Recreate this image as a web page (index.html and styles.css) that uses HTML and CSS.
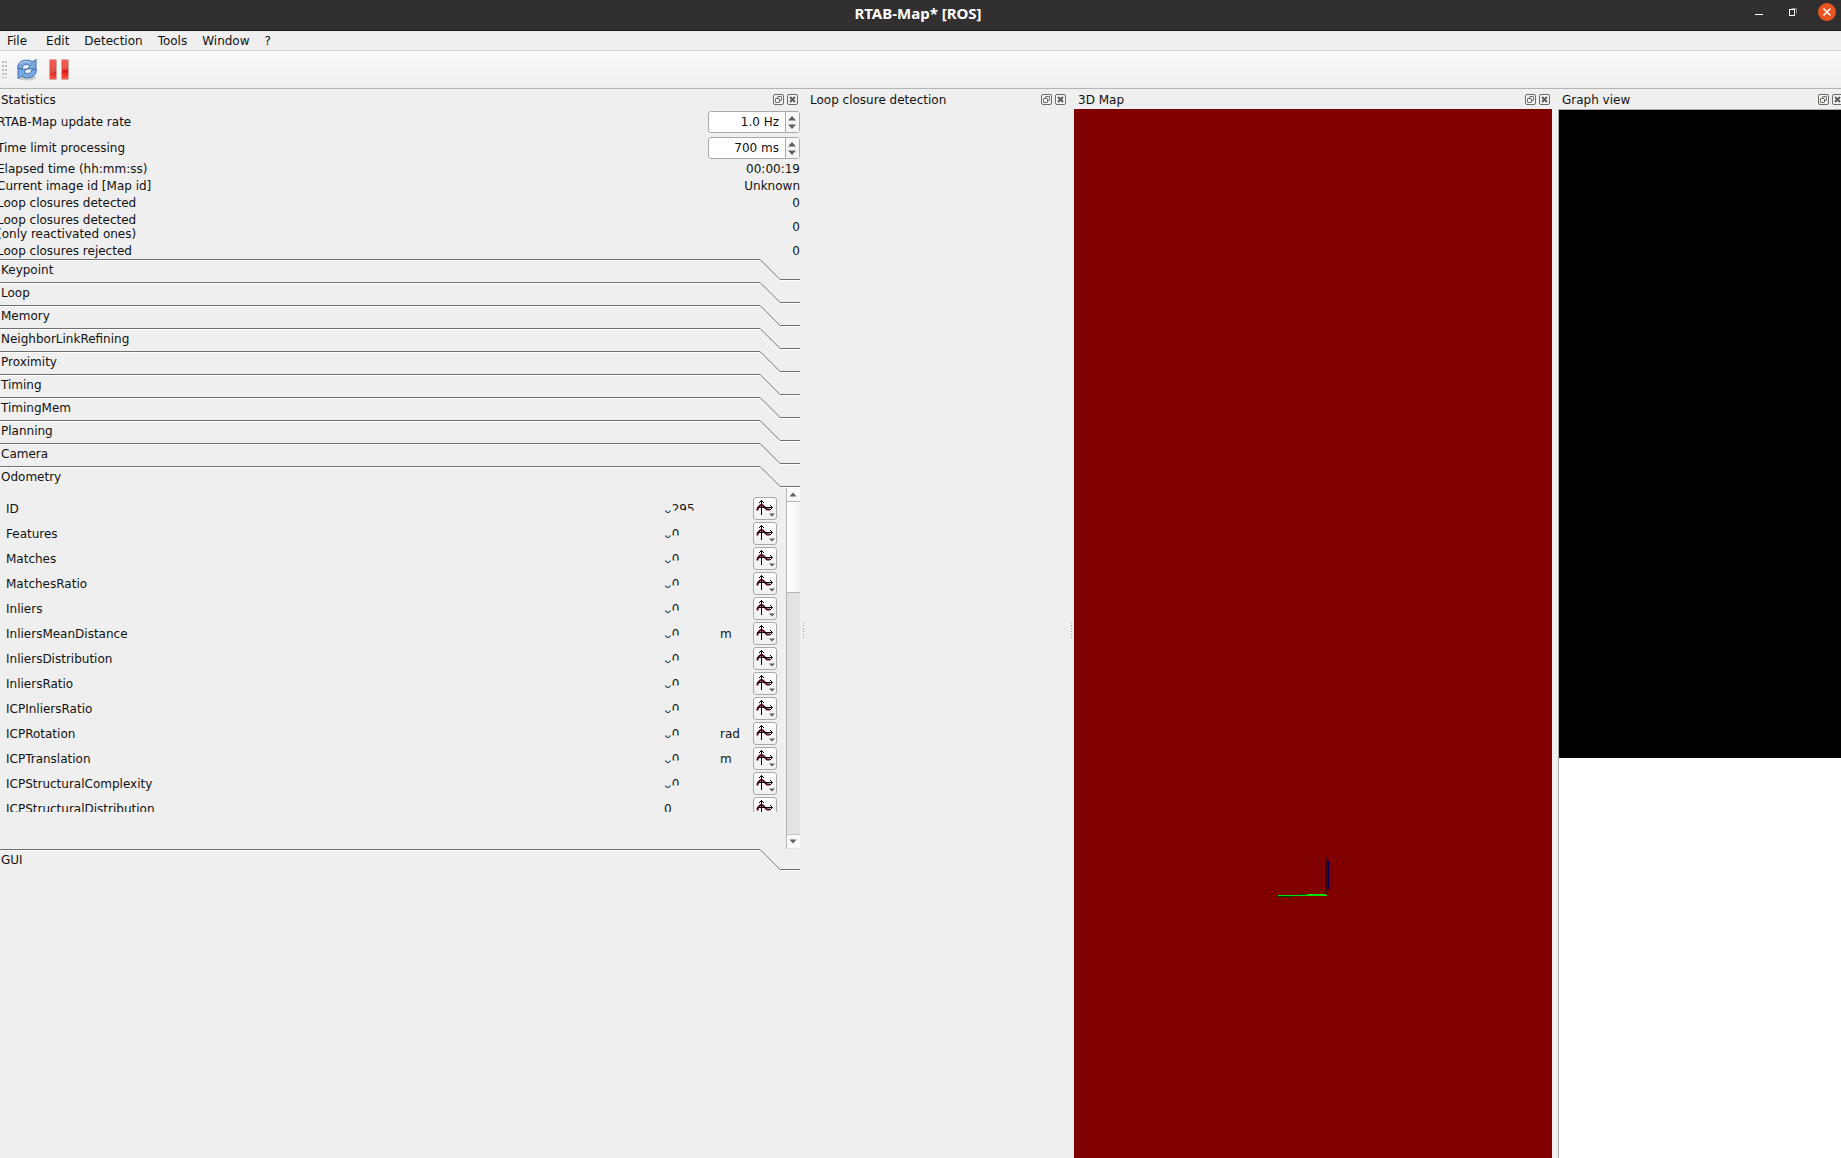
FILE: index.html
```html
<!DOCTYPE html>
<html lang="en">
<head>
<meta charset="utf-8">
<title>RTAB-Map* [ROS]</title>
<link rel="stylesheet" href="styles.css">
</head>
<body>
<svg class="defs" aria-hidden="true">
  <linearGradient id="shine" x1="0" y1="0" x2="0" y2="1"><stop offset="0" stop-color="#ff6054"/><stop offset=".5" stop-color="#e2504a"/><stop offset="1" stop-color="#e2504a"/></linearGradient>
  <linearGradient id="shade" x1="0" y1="0" x2="0" y2="1"><stop offset="0" stop-color="#d40a04"/><stop offset="1" stop-color="#ff5a4e"/></linearGradient>
  <symbol id="float" viewBox="0 0 11 11"><rect x=".5" y=".5" width="10" height="10" rx="1.5" fill="#f4f4f3" stroke="#6e6c69"/><rect x="4.5" y="2.5" width="4" height="4" rx=".5" fill="none" stroke="#6e6c69"/><rect x="2.5" y="4.5" width="4" height="4" rx=".5" fill="#f4f4f3" stroke="#6e6c69"/></symbol>
  <symbol id="close" viewBox="0 0 11 11"><rect x=".5" y=".5" width="10" height="10" rx="1.5" fill="#f4f4f3" stroke="#6e6c69"/><path d="M3 3l5 5M8 3l-5 5" stroke="#5c5a57" stroke-width="2"/></symbol>
  <symbol id="plot" viewBox="0 0 24 23"><path d="M4.500 13.500V12L6.500 9Q8.500 7 10.500 9L14 12.500H17" fill="none" stroke="#5a0a2c" stroke-width="2"/><path d="M8.500 3v15M4 10.500h15M6 6l2.500-2.500L11 6M17 8l2.500 2.500L17 13" fill="none" stroke="#000"/><path d="M16 16.500h6l-3 3z" fill="#5e5e5e"/></symbol>
</svg>
<header class="titlebar">
  <h1>RTAB-Map* [ROS]</h1>
  <div class="window-buttons">
    <button aria-label="Minimize"><svg width="8" height="18"><path d="M0 11.500h8" stroke="#fff"/></svg></button>
    <button aria-label="Restore"><svg width="8" height="18"><path d="M2.500 5.500h5v5" fill="none" stroke="#8c8a8a"/><rect x=".5" y="6.500" width="5" height="6" fill="none" stroke="#fff"/></svg></button>
    <button aria-label="Close"><svg width="18" height="18"><circle cx="9" cy="9" r="9" fill="#e95420"/><path d="M5.500 5.500l7 7M12.500 5.500l-7 7" stroke="#fff" stroke-width="1.500"/></svg></button>
  </div>
</header>
<nav class="menubar">
  <button>File</button><button>Edit</button><button>Detection</button><button>Tools</button><button>Window</button><button>?</button>
</nav>
<div class="toolbar">
  <span class="grip"></span>
  <button aria-label="Refresh"><svg width="22" height="24" viewBox="0 0 22 24"><ellipse cx="11" cy="20" rx="9" ry="2.500" fill="#000" opacity=".16"/><path d="M1.500 10.500C1.500 4 7 1 14 2.500L16 4l4-2.500V11h-9l3-3C11 5.500 7 6 6 10.500z" fill="#7ba8da" stroke="#3f74b5"/><path d="M20.500 11.500c0 6.500-5.500 9.500-12.500 8L6 18l-4 2.500V11h9l-3 3c3 2.500 7 2 8-2.500z" fill="#7ba8da" stroke="#3f74b5"/><path d="M4 6C6 3 11 2.500 15 5" fill="none" stroke="#c6dcf4"/></svg></button>
  <button aria-label="Pause"><svg width="20" height="22" viewBox="0 0 20 22"><g fill="url(#shine)" stroke="#cfa5a2"><rect x=".5" y=".5" width="7" height="20" rx="1"/><rect x="12.500" y=".5" width="7" height="20" rx="1"/></g><path d="M1 15l6-3v8H1zM13 11.500l6-1V20h-6z" fill="url(#shade)"/></svg></button>
</div>
<main class="docks">
  <section class="dock">
    <header class="dock-title"><h2>Statistics</h2><button aria-label="Float"><svg><use href="#float"/></svg></button><button aria-label="Close"><svg><use href="#close"/></svg></button></header>
    <div class="stats">
      <div class="stat"><label for="rate">RTAB-Map update rate</label><span class="spin"><input id="rate" value="1.0 Hz"><svg width="14" height="20"><path d="M2 8.500h8L6 4zM2 12.500h8L6 17z" fill="#5e5e5e"/></svg></span></div>
      <div class="stat"><label for="limit">Time limit processing</label><span class="spin"><input id="limit" value="700 ms"><svg width="14" height="20"><path d="M2 8.500h8L6 4zM2 12.500h8L6 17z" fill="#5e5e5e"/></svg></span></div>
      <div class="stat"><span>Elapsed time (hh:mm:ss)</span><span>00:00:19</span></div>
      <div class="stat"><span>Current image id [Map id]</span><span>Unknown</span></div>
      <div class="stat"><span>Loop closures detected</span><span>0</span></div>
      <div class="stat"><span>Loop closures detected<br>(only reactivated ones)</span><span>0</span></div>
      <div class="stat"><span>Loop closures rejected</span><span>0</span></div>
    </div>
    <div class="toolbox" id="toolbox"></div>
  </section>
  <div class="splitter"></div>
  <section class="dock">
    <header class="dock-title"><h2>Loop closure detection</h2><button aria-label="Float"><svg><use href="#float"/></svg></button><button aria-label="Close"><svg><use href="#close"/></svg></button></header>
  </section>
  <div class="splitter"></div>
  <section class="dock">
    <header class="dock-title"><h2>3D Map</h2><button aria-label="Float"><svg><use href="#float"/></svg></button><button aria-label="Close"><svg><use href="#close"/></svg></button></header>
    <div class="map"><svg class="axes" width="54" height="42" shape-rendering="crispEdges"><path d="M50.500 1v37" stroke="#380000"/><path d="M52.500 5v28" stroke="#000050"/><path d="M51.500 4v35" stroke="#0000c8"/><path d="M2 40.500h16M22 38.500h10" stroke="#003c00"/><path d="M2 39.500h49M31 38.500h19" stroke="#00e000"/></svg></div>
  </section>
  <div></div>
  <section class="dock">
    <header class="dock-title overhang"><h2>Graph view</h2><button aria-label="Float"><svg><use href="#float"/></svg></button><button aria-label="Close"><svg><use href="#close"/></svg></button></header>
    <div class="graph"><div class="scene"></div><div class="blank"></div></div>
  </section>
</main>
<script src="app.js"></script>
</body>
</html>
```
FILE: styles.css
```css
* { box-sizing: border-box; }
body {
  margin: 0;
  height: 100vh;
  display: flex;
  flex-direction: column;
  overflow: hidden;
  background: #efefef;
  color: #111;
  font: 12px/14px "DejaVu Sans", sans-serif;
}
h1, h2 { margin: 0; font-size: inherit; font-weight: normal; }
button { border: 0; padding: 0; background: none; color: inherit; font: inherit; }
svg { display: block; }
.defs { position: absolute; width: 0; height: 0; }

.titlebar {
  display: grid;
  grid-template-columns: 1fr auto 1fr;
  height: 31px;
  padding: 3px 5px 0 0;
  background: #322f30;
  border-bottom: 1px solid #1c1a1a;
  color: #fff;
}
.titlebar h1 { grid-column: 2; font: bold 15px/20px "Noto Sans", sans-serif; }
.window-buttons { display: flex; justify-content: flex-end; gap: 21px; height: 18px; }
.window-buttons button:first-child { margin-right: 5px; }

.menubar { display: flex; height: 20px; border-bottom: 1px solid #d2d2d2; }
.menubar button { padding: 0 8px 0 7px; }
.menubar button:first-child { padding-right: 12px; }

.toolbar {
  display: flex;
  align-items: center;
  height: 38px;
  padding-left: 2px;
  border-bottom: 1px solid #b4b4b4;
  background: linear-gradient(#fafafa, #efefef);
}
.toolbar button { margin-right: 11px; }
.grip {
  width: 5px;
  height: 17px;
  margin-right: 9px;
  background: radial-gradient(circle at 1px 1px, #bbb 1px, transparent 1px) 0 0 / 3px 4px;
}

.docks {
  flex: 1;
  min-height: 0;
  display: grid;
  grid-template-columns: 800fr 7px 261fr 6px 478fr 6px 283fr;
}
.dock { min-width: 0; display: flex; flex-direction: column; }
.dock-title {
  display: flex;
  align-items: center;
  gap: 3px;
  height: 20px;
  padding: 1px 2px 0 1px;
}
.dock-title h2 { flex: 1; }
.dock:nth-child(n + 3) .dock-title h2 { padding-left: 2px; }
.dock:nth-child(n + 5) .dock-title h2 { padding-left: 3px; }
.dock-title svg { width: 11px; height: 11px; }
.overhang { margin-right: -4px; }
.splitter {
  align-self: center;
  width: 1px;
  height: 17px;
  margin: 14px 0 0 3px;
  background: repeating-linear-gradient(#a0a0a0 0 1px, transparent 1px 3px);
}

.stats { display: flex; flex-direction: column; gap: 3px; padding-top: 2px; }
.stat { display: flex; align-items: center; justify-content: space-between; margin-left: -3px; }
.stat:first-child { margin-bottom: 1px; }
.spin {
  display: flex;
  width: 92px;
  height: 22px;
  border: 1px solid #a9a9a9;
  border-radius: 3px;
  background: #fff;
}
.spin input {
  flex: 1;
  min-width: 0;
  border: 0;
  padding: 0 6px 0 0;
  background: none;
  color: inherit;
  font: inherit;
  text-align: right;
}
.spin svg { border-left: 1px solid #a9a9a9; background: #f6f6f6; }

.toolbox { display: flex; flex-direction: column; padding-top: 1px; }
.tab { display: grid; grid-template-columns: 1fr 40px; height: 23px; text-align: left; }
.tab span { height: 23px; padding: 3px 0 0 1px; border-top: 1px solid #6f6f6f; box-shadow: inset 0 1px #fff; }
.page { display: flex; height: 361px; margin-top: -1px; }
.rows { flex: 1; height: 324px; padding: 9px 9px 0 6px; overflow: hidden; }
.rows table { width: 100%; border-collapse: collapse; }
.rows td, .rows th { height: 25px; padding: 0 0 2px; font-weight: normal; text-align: left; }
.value { width: 56px; }
.unit { width: 33px; }
.rows .action { width: 24px; padding: 0; vertical-align: top; }
.value span { display: inline-block; }
.old { clip-path: inset(9px 0 0 0); }
.new { clip-path: inset(0 0 5px 0); }
.plot {
  display: block;
  width: 24px;
  height: 23px;
  border: 1px solid #a9a9a9;
  border-radius: 3px;
  background: linear-gradient(#fff, #f0f0f0);
}
.plot svg { width: 24px; height: 23px; margin: -1px; }
.scrollbar {
  display: flex;
  flex-direction: column;
  width: 14px;
  border-left: 1px solid #b4b4b4;
  background: #e3e3e3;
}
.scrollbar button { height: 13px; background: #fafafa; }
.thumb {
  height: 92px;
  border: solid #b4b4b4;
  border-width: 1px 0;
  background: linear-gradient(90deg, #fff, #f2f2f2);
}
.scrollbar .down { height: 14px; margin: auto 0 1px; border-top: 1px solid #c4c4c4; }

.map { position: relative; flex: 1; background: #800000; }
.axes { position: absolute; left: 42.3%; top: 71.2%; }
.graph {
  flex: 1;
  display: flex;
  flex-direction: column;
  border: solid #a9a9a9;
  border-width: 1px 0 0 1px;
}
.scene { flex: 648; background: #000; }
.blank { flex: 400; background: #fff; }
```
FILE: app.js
```js
const tabs = ["Keypoint", "Loop", "Memory", "NeighborLinkRefining", "Proximity", "Timing",
  "TimingMem", "Planning", "Camera", "Odometry"];
const odometry = [
  ["ID", "295"], ["Features", "0"], ["Matches", "0"], ["MatchesRatio", "0"], ["Inliers", "0"],
  ["InliersMeanDistance", "0", "m"], ["InliersDistribution", "0"], ["InliersRatio", "0"],
  ["ICPInliersRatio", "0"], ["ICPRotation", "0", "rad"], ["ICPTranslation", "0", "m"],
  ["ICPStructuralComplexity", "0"], ["ICPStructuralDistribution", ""]
];

const tab = name => `<button class="tab"><span>${name}</span>
  <svg width="40" height="23"><path d="M0 1.5l20 20h20" fill="none" stroke="#fff"/><path d="M0 .5l20 20h20" fill="none" stroke="#6f6f6f"/></svg></button>`;

const row = ([name, value, unit = ""]) => `<tr><th scope="row">${name}</th>
  <td class="value">${value ? `<span class="old">0</span><span class="new">${value}</span>` : "0"}</td>
  <td class="unit">${unit}</td>
  <td class="action"><button class="plot" aria-label="Plot ${name}"><svg><use href="#plot"/></svg></button></td></tr>`;

document.getElementById("toolbox").innerHTML = tabs.map(tab).join("") + `
  <div class="page">
    <div class="rows"><table>${odometry.map(row).join("")}</table></div>
    <div class="scrollbar">
      <button aria-label="Scroll up"><svg width="13" height="13"><path d="M2.500 8.500h7L6 4.500z" fill="#5e5e5e"/></svg></button>
      <div class="thumb"></div>
      <button class="down" aria-label="Scroll down"><svg width="13" height="13"><path d="M2.500 4.500h7L6 8.500z" fill="#5e5e5e"/></svg></button>
    </div>
  </div>` + tab("GUI");
```
